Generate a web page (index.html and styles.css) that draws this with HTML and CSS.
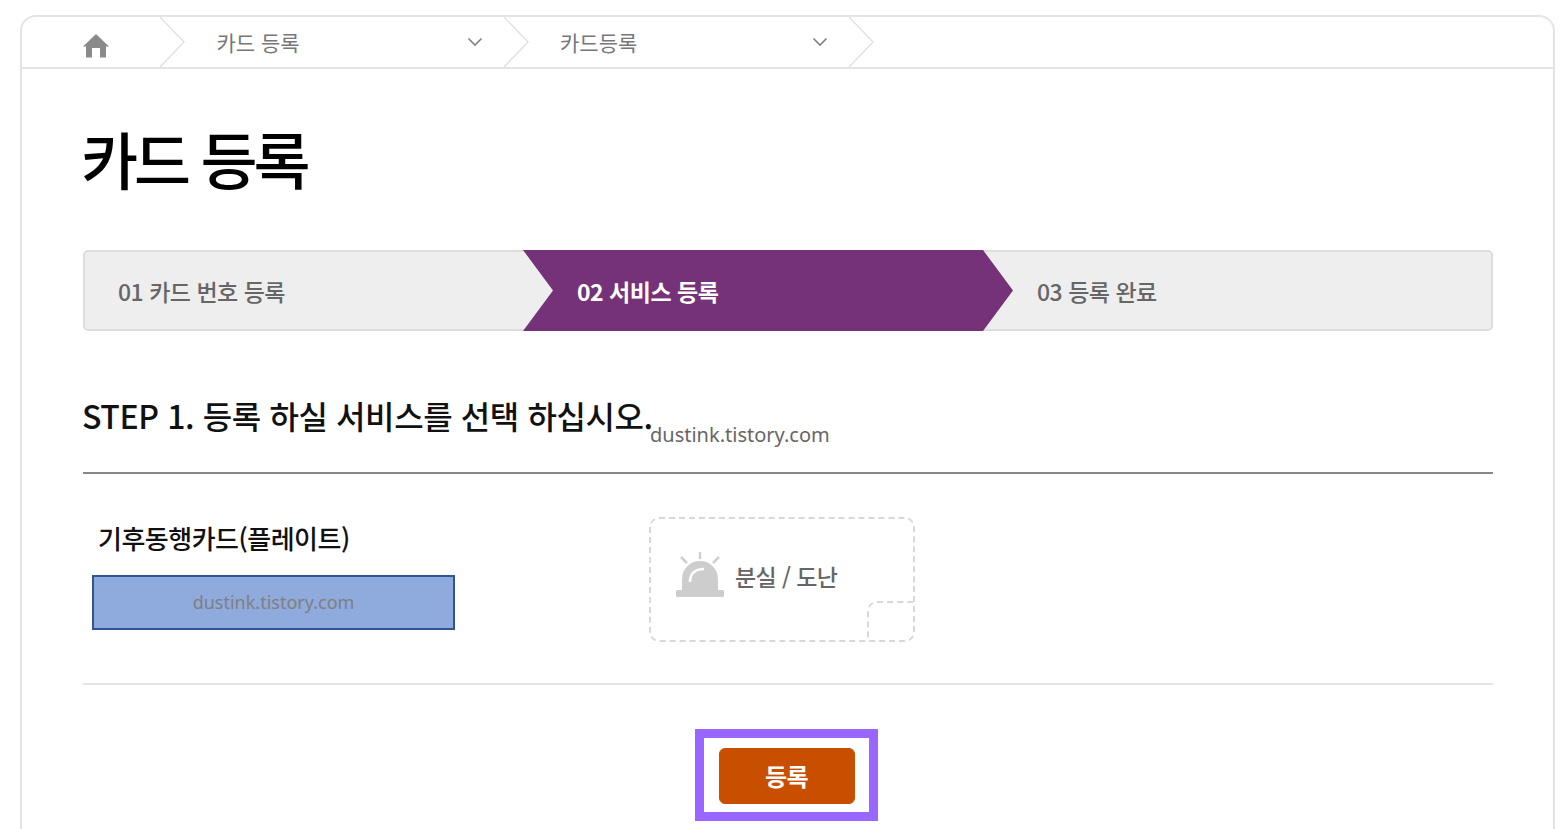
FILE: index.html
```html
<!DOCTYPE html>
<html lang="ko">
<head>
  <meta charset="UTF-8">
  <title>카드 등록</title>
  <link rel="stylesheet" href="styles.css">
</head>
<body>

<div class="panel">
  <div class="crumbs">
    <div class="crumb crumb-home">
      <svg class="home-icon" width="26" height="24" viewBox="0 0 26 24"><path d="M13 0 0 12.500H3V23.500H9V14H17V23.500H23V12.500H26z" fill="#8a8a8a"/></svg>
      <svg class="crumb-sep" width="25" height="50" viewBox="0 0 25 50"><path d="M0 0 24 25 0 50" fill="none" stroke="#e2e2e2" stroke-width="1.500"/></svg>
    </div>
    <div class="crumb">
      <span class="crumb-label">카드 등록</span>
      <svg class="crumb-arrow" width="16" height="10" viewBox="0 0 16 10"><path d="M1.500 1.500 8 8l6.500-6.500" fill="none" stroke="#808080" stroke-width="1.600"/></svg>
      <svg class="crumb-sep" width="25" height="50" viewBox="0 0 25 50"><path d="M0 0 24 25 0 50" fill="none" stroke="#e2e2e2" stroke-width="1.500"/></svg>
    </div>
    <div class="crumb">
      <span class="crumb-label tight">카드등록</span>
      <svg class="crumb-arrow" width="16" height="10" viewBox="0 0 16 10"><path d="M1.500 1.500 8 8l6.500-6.500" fill="none" stroke="#808080" stroke-width="1.600"/></svg>
      <svg class="crumb-sep" width="25" height="50" viewBox="0 0 25 50"><path d="M0 0 24 25 0 50" fill="none" stroke="#e2e2e2" stroke-width="1.500"/></svg>
    </div>
  </div>

  <div class="content">
    <h1 class="page-title">카드 등록</h1>

    <div class="steps">
      <div class="step step-first">01 카드 번호 등록</div>
      <div class="step step-active">02 서비스 등록</div>
      <div class="step step-last">03 등록 완료</div>
    </div>

    <div class="section-head">
      <h2 class="section-title">STEP 1. 등록 하실 서비스를 선택 하십시오.</h2>
      <span class="watermark">dustink.tistory.com</span>
    </div>

    <div class="service-row">
      <div class="card-info">
        <div class="card-name">기후동행카드(플레이트)</div>
        <div class="card-mask">dustink.tistory.com</div>
      </div>
      <div class="service-box">
        <svg class="siren" width="50" height="46" viewBox="0 0 50 46">
          <path d="M25 0v7M6 5l6 6M44 5l-6 6" stroke="#cfcfcf" stroke-width="2.500" fill="none"/>
          <path d="M7 38V27a18 18 0 0 1 36 0v11z" fill="#cdcdcd"/>
          <path d="M15 30c0-8 5-13 14-13" stroke="#fff" stroke-width="2.500" fill="none"/>
          <rect x="1" y="38" width="48" height="7" rx="1.500" fill="#cdcdcd"/>
        </svg>
        <span class="service-label">분실 / 도난</span>
        <span class="service-corner"></span>
      </div>
    </div>

    <div class="actions">
      <div class="highlight">
        <button class="submit-button">등록</button>
      </div>
    </div>
  </div>
</div>

</body>
</html>
```

FILE: styles.css
```css
html, body {
  margin: 0;
  height: 829px;
  overflow: hidden;
  background: #fff;
}

body {
  font-family: "Noto Sans CJK KR", "Noto Sans", sans-serif;
}

.panel {
  margin: 15px 13px 0 20px;
  height: 814px;
  border: 2px solid #e4e4e4;
  border-bottom: 0;
  border-radius: 16px 16px 0 0;
  box-sizing: border-box;
}

.crumbs {
  display: flex;
  height: 52px;
  border-bottom: 2px solid #e4e4e4;
  box-sizing: border-box;
}

.crumb {
  display: flex;
  flex: none;
  align-items: center;
  width: 344.5px;
  padding-left: 32px;
  box-sizing: border-box;
}

.crumb-home {
  width: 162.5px;
  padding-left: 61px;
}

.home-icon {
  margin-right: 50.5px;
  margin-top: 7px;
}

.crumb-label {
  flex: none;
  width: 250.5px;
  font-size: 21px;
  color: #777;
}

.crumb-label.tight {
  margin-left: -1px;
  margin-right: 1px;
}

.crumb-arrow {
  flex: none;
  margin-right: 21px;
  margin-top: -1px;
}

.crumb-sep {
  flex: none;
}

.content {
  padding: 0 60px 0 61px;
}

.page-title {
  margin: 43px 0 0 -2px;
  height: 138px;
  font-size: 62px;
  line-height: 92px;
  font-weight: 500;
  letter-spacing: -4px;
  color: #000;
}

.steps {
  display: flex;
  height: 81px;
  background: #eee;
  border: 2px solid #ddd;
  border-radius: 5px;
  box-sizing: border-box;
}

.step {
  display: flex;
  align-items: center;
  font-size: 23px;
  font-weight: 500;
  letter-spacing: -0.5px;
  color: #666;
}

.step-first {
  width: 438px;
  padding-left: 33px;
  box-sizing: border-box;
}

.step-active {
  width: 490px;
  margin: -2px 0;
  padding-left: 54px;
  box-sizing: border-box;
  background: #753278;
  color: #fff;
  font-weight: 700;
  clip-path: polygon(0 0, 460px 0, 100% 50%, 460px 100%, 0 100%, 30px 50%);
}

.step-last {
  flex: 1;
  padding-left: 24px;
}

.section-head {
  position: relative;
  height: 143px;
  border-bottom: 2px solid #888;
  box-sizing: border-box;
}

.section-title {
  margin: 0 0 0 -1px;
  padding-top: 61px;
  font-size: 32px;
  line-height: 46px;
  font-weight: 500;
  letter-spacing: -0.4px;
  color: #111;
}

.watermark {
  position: absolute;
  left: 567px;
  top: 90px;
  font-family: "Noto Sans", sans-serif;
  font-size: 20px;
  color: #666;
}

.service-row {
  display: flex;
  height: 211px;
  border-bottom: 2px solid #e4e4e4;
  box-sizing: border-box;
}

.card-info {
  width: 566px;
  padding: 45px 0 0 9px;
  box-sizing: border-box;
}

.card-name {
  height: 56px;
  padding-left: 6px;
  font-size: 26px;
  line-height: 38px;
  font-weight: 500;
  letter-spacing: -0.5px;
  color: #111;
}

.card-mask {
  width: 363px;
  height: 55px;
  background: #8faadc;
  border: 2px solid #2f5597;
  box-sizing: border-box;
  text-align: center;
  font-family: "Noto Sans", sans-serif;
  font-size: 18px;
  line-height: 50px;
  color: #7f7f7f;
}

.service-box {
  position: relative;
  display: flex;
  align-items: center;
  width: 266px;
  height: 125px;
  margin-top: 43px;
  padding: 0 0 7px 24px;
  border: 2px dashed #d8d8d8;
  border-radius: 10px;
  box-sizing: border-box;
}

.siren {
  margin: -3px 10px 0 0;
}

.service-label {
  font-size: 23px;
  font-weight: 500;
  letter-spacing: -0.6px;
  color: #666;
}

.service-corner {
  position: absolute;
  right: 0;
  bottom: 0;
  width: 46px;
  height: 39px;
  border-top: 2px dashed #d8d8d8;
  border-left: 2px dashed #d8d8d8;
  border-radius: 10px 0 0 0;
  box-sizing: border-box;
}

.actions {
  display: flex;
  justify-content: center;
  padding: 44px 4px 0 0;
}

.highlight {
  padding: 10px 14px 8px 15px;
  border: 9px solid #9966ff;
  background: #fff;
}

.submit-button {
  display: block;
  width: 136px;
  height: 56px;
  padding: 0 0 2px;
  background: #c94f00;
  border: 1px solid #c94f00;
  border-radius: 6px;
  color: #fff;
  font-family: inherit;
  font-size: 24px;
  font-weight: 700;
  letter-spacing: -0.5px;
}
```
